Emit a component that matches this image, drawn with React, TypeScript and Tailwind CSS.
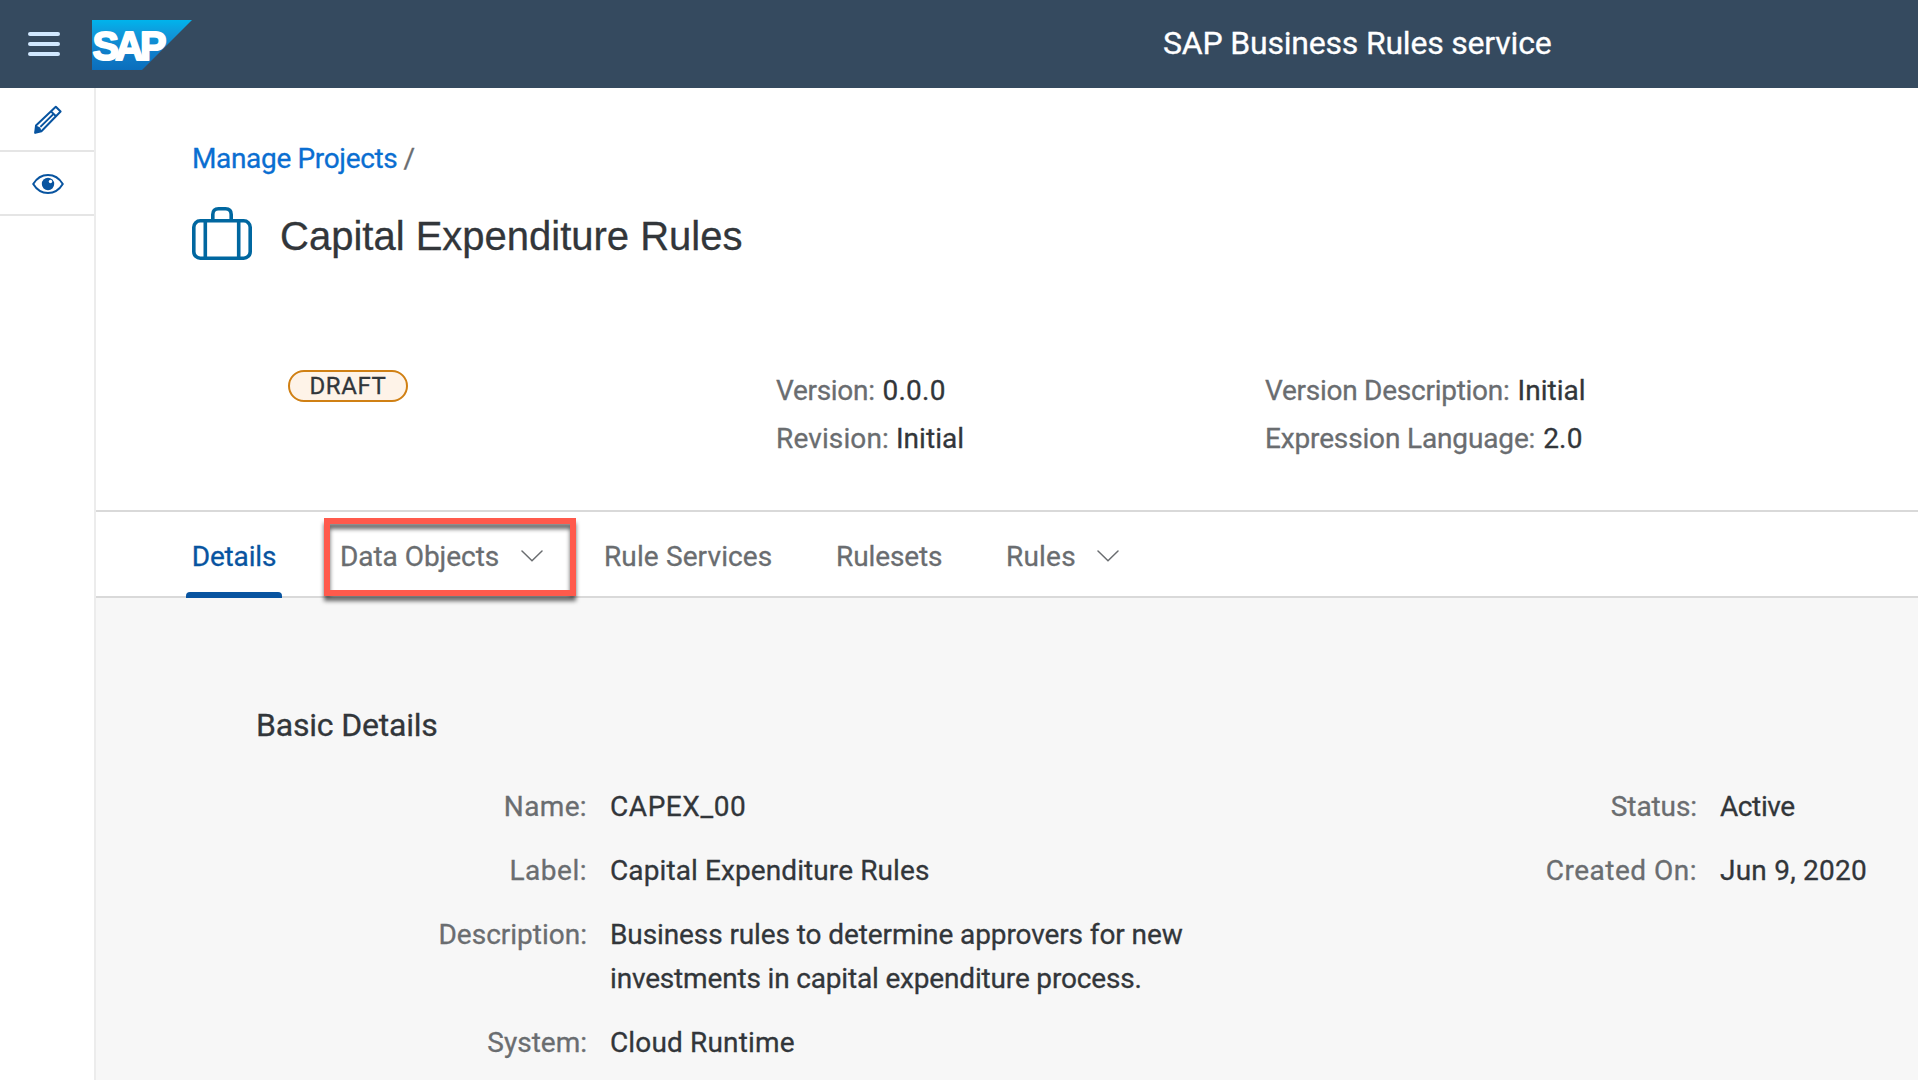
import React from "react";

type FieldProps = {
  label: string;
  labelClass?: string;
  valueClass?: string;
  children: React.ReactNode;
};

function MenuIcon() {
  return (
    <svg width="32" height="24" viewBox="0 0 32 24" stroke="#d1e8ff" strokeWidth="4" strokeLinecap="round">
      <path d="M2 2H30M2 12H30M2 22H30" />
    </svg>
  );
}

function SapLogo() {
  return (
    <svg width="100" height="50" viewBox="0 0 100 50">
      <defs>
        <linearGradient id="sapBlue" x1="0" y1="0" x2="0" y2="1">
          <stop offset="0" stopColor="#00b4ec" />
          <stop offset="0.25" stopColor="#0f9bdc" />
          <stop offset="0.6" stopColor="#1080cb" />
          <stop offset="1" stopColor="#0b6ebc" />
        </linearGradient>
      </defs>
      <path d="M0 0H100L50 50H0Z" fill="url(#sapBlue)" />
      <text
        x="0.5"
        y="39.500"
        fill="#fff"
        stroke="#fff"
        strokeWidth="2"
        strokeLinejoin="round"
        fontFamily="Liberation Sans, sans-serif"
        fontWeight="700"
        fontSize="41"
        textLength="70"
        lengthAdjust="spacingAndGlyphs"
        letterSpacing="-4"
      >
        SAP
      </text>
    </svg>
  );
}

function PencilIcon() {
  return (
    <svg width="30" height="30" viewBox="0 0 30 30" fill="none" stroke="#0854a0" strokeWidth="2">
      <path d="M3 20.5L22.8 1.8L27.6 6.5L8.4 26.2L2.2 27.8Z" strokeLinejoin="round" />
      <path d="M18 6.4L23 11.2M7.4 21.9L20.6 8.9" />
      <path d="M3 20.5L1.4 28.6L8.6 26.4L7.2 22.4Z" fill="#0854a0" stroke="none" />
    </svg>
  );
}

function EyeIcon() {
  return (
    <svg width="32" height="20" viewBox="0 0 32 20" fill="none">
      <path d="M1.2 10C8.5 -2 23.5 -2 30.8 10C23.5 22 8.5 22 1.2 10Z" stroke="#0854a0" strokeWidth="2" strokeLinejoin="round" />
      <circle cx="16" cy="10" r="6.2" fill="#0854a0" />
      <circle cx="18.500" cy="7.5" r="1.7" fill="#fff" />
    </svg>
  );
}

function SuitcaseIcon() {
  return (
    <svg width="60" height="53" viewBox="0 0 60 53" fill="none" stroke="#0067a0" strokeWidth="3.6">
      <rect x="1.8" y="13.8" width="56.4" height="37.4" rx="6.5" />
      <path d="M13.3 14V51M46.7 14V51" />
      <path d="M20.8 13.5V7.5Q20.8 1.8 26.5 1.8H33.5Q39.2 1.8 39.2 7.5V13.5" />
    </svg>
  );
}

function Chevron() {
  return (
    <svg width="22" height="12" viewBox="0 0 22 12" fill="none" stroke="#6a6d70" strokeWidth="1.5" strokeLinecap="round">
      <path d="M1 1L11 10.8L21 1" />
    </svg>
  );
}

function Field({ label, labelClass = "", valueClass = "", children }: FieldProps) {
  return (
    <div className="flex gap-[23px]">
      <dt className={`w-[330px] shrink-0 text-right text-[#6a6d70] ${labelClass}`}>{label}</dt>
      <dd className={`whitespace-nowrap ${valueClass}`}>{children}</dd>
    </div>
  );
}

export default function App() {
  return (
    <div className="flex h-[1080px] w-[1918px] flex-col overflow-hidden bg-white font-['Roboto',sans-serif] text-[28px] leading-[44px] text-[#32363a] [-webkit-text-stroke:0.3px]">
      <header className="flex h-[88px] shrink-0 items-center bg-[#354a5f] pl-[28px]">
        <MenuIcon />
        <div className="ml-8 mt-[2px]">
          <SapLogo />
        </div>
        <h1 className="mb-[2px] ml-[971px] text-[32px] tracking-[-0.2px] text-white">SAP Business Rules service</h1>
      </header>

      <div className="flex min-h-0 flex-1">
        <nav className="w-24 shrink-0 border-r-2 border-[#ececec]">
          <button className="flex h-16 w-full items-center justify-center border-b-2 border-[#e5e5e5] pl-[2px] pt-[2px]">
            <PencilIcon />
          </button>
          <button className="flex h-16 w-full items-center justify-center border-b-2 border-[#e5e5e5] pl-[2px] pt-[2px]">
            <EyeIcon />
          </button>
        </nav>

        <main className="flex min-w-0 flex-1 flex-col">
          <section className="h-[422px] shrink-0 pl-24 pt-[49px]">
            <div className="flex gap-[6px] tracking-[-0.34px]">
              <a className="text-[#0a6ed1]">Manage Projects</a>
              <span className="text-[#6a6d70]">/</span>
            </div>
            <div className="mt-[26px] flex gap-7">
              <SuitcaseIcon />
              <h2 className="mt-[5px] font-['Liberation_Sans',sans-serif] text-[40px] leading-[48px]">
                Capital Expenditure Rules
              </h2>
            </div>
            <div className="ml-24 mt-[107px] grid grid-cols-[488px_489px_1fr] leading-[48px]">
              <div className="mt-[3px]">
                <span className="flex h-8 w-[120px] items-center justify-center rounded-full border-2 border-[#d08014] bg-[#fef3e8] text-[24px] tracking-[0.6px]">
                  DRAFT
                </span>
              </div>
              <div>
                <p>
                  <span className="tracking-[-0.3px] text-[#6a6d70]">Version:</span>{" "}
                  <span className="ml-[1px] tracking-[0.2px]">0.0.0</span>
                </p>
                <p>
                  <span className="tracking-[0.13px] text-[#6a6d70]">Revision:</span>{" "}
                  <span className="tracking-[0.05px]">Initial</span>
                </p>
              </div>
              <div>
                <p>
                  <span className="tracking-[-0.26px] text-[#6a6d70]">Version Description:</span>{" "}
                  <span className="ml-[1px] tracking-[0.05px]">Initial</span>
                </p>
                <p>
                  <span className="tracking-[-0.15px] text-[#6a6d70]">Expression Language:</span>{" "}
                  <span className="ml-[1px] tracking-[0.2px]">2.0</span>
                </p>
              </div>
            </div>
          </section>

          <div className="flex h-[88px] shrink-0 border-y-2 border-[#d9d9d9] pl-[90px] text-[#6a6d70]">
            <div className="relative flex w-24 items-center justify-center pt-[5px] tracking-[-0.14px] text-[#0854a0]">
              Details
              <span className="absolute -bottom-[2px] left-0 h-[6px] w-full rounded-t-[4px] bg-[#0854a0]" />
            </div>
            <div className="relative ml-[58px] flex w-[264px] items-center pt-[5px] tracking-[-0.05px]">
              Data Objects
              <span className="-mt-[2px] ml-[22px]">
                <Chevron />
              </span>
              <span className="absolute -left-4 top-[6px] h-[78px] w-[252px] border-[6px] border-[#ff5a4c] [filter:drop-shadow(0_5px_2px_rgba(0,0,0,0.6))]" />
            </div>
            <div className="flex w-[232px] items-center pt-[5px] tracking-[0.12px]">Rule Services</div>
            <div className="flex w-[170px] items-center pt-[5px] tracking-[-0.1px]">Rulesets</div>
            <div className="flex items-center pt-[5px] tracking-[0.2px]">
              Rules
              <span className="-mt-[2px] ml-[21px]">
                <Chevron />
              </span>
            </div>
          </div>

          <section className="flex-1 bg-[#f7f7f7] pt-[103px]">
            <h3 className="ml-[160px] text-[32px] leading-[48px] tracking-[-0.2px]">Basic Details</h3>
            <div className="mt-9 flex">
              <dl className="flex w-[1110px] flex-col gap-5 pl-[161px]">
                <Field label="Name:" labelClass="tracking-[0.35px]" valueClass="tracking-[0.57px]">
                  CAPEX_00
                </Field>
                <Field label="Label:" labelClass="tracking-[0.5px]" valueClass="tracking-[0.1px]">
                  Capital Expenditure Rules
                </Field>
                <Field label="Description:" valueClass="tracking-[-0.1px]">
                  Business rules to determine approvers for new
                  <br />
                  <span className="tracking-[-0.17px]">investments in capital expenditure process.</span>
                </Field>
                <Field label="System:" valueClass="tracking-[0.15px]">
                  Cloud Runtime
                </Field>
              </dl>
              <dl className="flex flex-col gap-5 pl-[161px]">
                <Field label="Status:" labelClass="tracking-[-0.09px]" valueClass="tracking-[-0.4px]">
                  Active
                </Field>
                <Field label="Created On:" labelClass="tracking-[0.5px]" valueClass="tracking-[0.23px]">
                  Jun 9, 2020
                </Field>
              </dl>
            </div>
          </section>
        </main>
      </div>
    </div>
  );
}
